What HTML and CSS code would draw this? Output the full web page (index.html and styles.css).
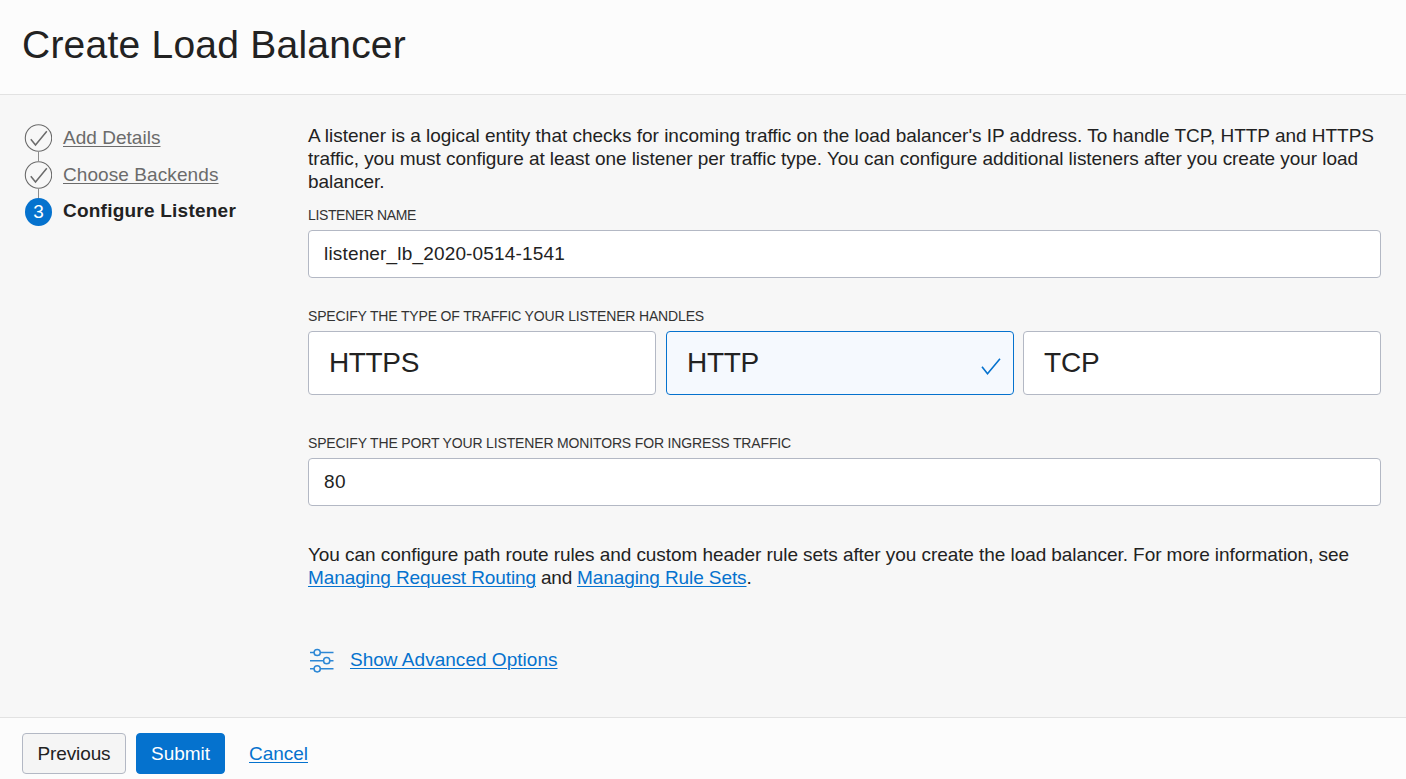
FILE: index.html
```html
<!DOCTYPE html>
<html lang="en">
<head>
<meta charset="utf-8">
<title>Create Load Balancer</title>
<link rel="stylesheet" href="styles.css">
</head>
<body>
<header class="header"><h1 class="title"><span class="fit" data-w="384">Create Load Balancer</span></h1></header>
<main class="main">
  <nav class="steps">
    <a class="step done"><svg class="mark" width="28" height="28" viewBox="0 0 28 28"><circle cx="14.5" cy="14" r="13.2"/><path d="M6.8 15.2 11.5 21 22.8 7.2"/></svg><span class="step-label fit" data-w="97.5">Add Details</span></a>
    <a class="step done"><svg class="mark" width="28" height="28" viewBox="0 0 28 28"><circle cx="14.5" cy="14" r="13.2"/><path d="M6.8 15.2 11.5 21 22.8 7.2"/></svg><span class="step-label fit" data-w="155.5">Choose Backends</span></a>
    <div class="step current"><span class="number">3</span><span class="step-label fit" data-w="173">Configure Listener</span></div>
  </nav>
  <section class="content">
    <p class="text"><span class="fit" data-w="1066">A listener is a logical entity that checks for incoming traffic on the load balancer's IP address. To handle TCP, HTTP and HTTPS</span><br><span class="fit" data-w="1050">traffic, you must configure at least one listener per traffic type. You can configure additional listeners after you create your load</span><br><span class="fit" data-w="76.5">balancer.</span></p>
    <label class="label name-label"><span class="fit" data-w="108">LISTENER NAME</span></label>
    <div class="input"><span class="fit" data-w="241">listener_lb_2020-0514-1541</span></div>
    <div class="label type-label"><span class="fit" data-w="396">SPECIFY THE TYPE OF TRAFFIC YOUR LISTENER HANDLES</span></div>
    <div class="cards">
      <div class="card"><span class="fit" data-w="90">HTTPS</span></div>
      <div class="card selected"><span class="fit" data-w="72">HTTP</span><svg class="check" width="20" height="18" viewBox="0 0 20 18"><path d="M1 8.7 6.5 15.8 19 .8"/></svg></div>
      <div class="card"><span class="fit" data-w="55.5">TCP</span></div>
    </div>
    <label class="label port-label"><span class="fit" data-w="483">SPECIFY THE PORT YOUR LISTENER MONITORS FOR INGRESS TRAFFIC</span></label>
    <div class="input"><span class="fit" data-w="22">80</span></div>
    <p class="text info"><span class="fit" data-w="1041">You can configure path route rules and custom header rule sets after you create the load balancer. For more information, see</span><br><a class="link fit" data-w="228">Managing Request Routing</a><span class="fit" data-w="41">&nbsp;and&nbsp;</span><a class="link fit" data-w="169.5">Managing Rule Sets</a>.</p>
    <div class="advanced">
      <svg class="sliders" width="26" height="26" viewBox="0 0 26 26"><path d="M2 4.5H6M12.4 4.5H25.5M2 12.7H15.4M21.8 12.7H25.5M2 20.8H6M12.4 20.8H25.5"/><circle cx="9.2" cy="4.5" r="3.1"/><circle cx="18.7" cy="12.7" r="3.1"/><circle cx="9.2" cy="20.8" r="3.1"/></svg>
      <a class="link fit" data-w="207.5">Show Advanced Options</a>
    </div>
  </section>
</main>
<footer class="footer">
  <button class="button"><span class="fit" data-w="73">Previous</span></button>
  <button class="button primary"><span class="fit" data-w="59">Submit</span></button>
  <a class="link fit" data-w="59">Cancel</a>
</footer>
<script src="fit.js"></script>
</body>
</html>
```
FILE: styles.css
```css
* { box-sizing: border-box; }
body {
  margin: 0;
  height: 779px;
  display: flex;
  flex-direction: column;
  overflow: hidden;
  background: #fcfcfc;
  color: #222;
  font: 19px/23px "Liberation Sans", Arial, sans-serif;
}
.fit { white-space: nowrap; }
.header { height: 95px; flex: none; padding: 22px 22px 0; border-bottom: 1px solid #e2e2e2; }
.title { margin: 0; font-size: 39px; font-weight: 400; line-height: 45px; }
.main { flex: 1; display: flex; background: #f7f7f7; min-height: 0; }
.steps { width: 308px; flex: none; padding: 29px 0 0 24px; }
.step { display: flex; align-items: flex-start; height: 37px; position: relative; color: #6b6b6b; }
.step-label { margin: 2px 0 0 11px; }
.done .step-label { text-decoration: underline; text-decoration-thickness: 1px; text-underline-offset: 2px; text-decoration-skip-ink: none; }
.done::after { content: ""; position: absolute; left: 14px; top: 28px; width: 1px; height: 9px; background: #8c8c8c; }
.mark { flex: none; fill: none; stroke: #6b6b6b; stroke-width: 1.1; }
.mark path { stroke-width: 1.5; }
.current { color: #222; font-weight: 700; }
.current .step-label { margin-top: 1px; }
.number { width: 27px; height: 28px; margin-left: 1px; flex: none; border-radius: 50%; background: #0572ce; color: #fff; font-weight: 400; line-height: 28px; text-align: center; }
.content { width: 1073px; padding-top: 29px; }
.text { margin: 0; white-space: nowrap; }
.label { display: block; font-size: 14px; line-height: 16px; color: #333; }
.name-label { margin: 14px 0 7px; }
.input { height: 48px; padding: 12px 15px; background: #fff; border: 1px solid #b3b8c4; border-radius: 4px; line-height: 22px; }
.type-label { margin: 30px 0 7px; }
.cards { display: flex; gap: 10px; }
.card { display: flex; flex: none; justify-content: space-between; width: 348px; height: 64px; padding: 14px 12px 0 20px; background: #fff; border: 1px solid #b3b8c4; border-radius: 4px; font-size: 28px; line-height: 33px; }
.card:last-child { width: 358px; margin-left: -1px; }
.selected { background: #f5f9fe; border-color: #0572ce; }
.check { margin-top: 12px; fill: none; stroke: #0572ce; stroke-width: 1.6; }
.port-label { margin: 40px 0 7px; }
.info { margin-top: 37px; }
.link { color: #0572ce; text-decoration: underline; text-decoration-thickness: 1px; text-underline-offset: 2px; }
.advanced { display: flex; gap: 16px; margin-top: 59px; }
.sliders { flex: none; fill: none; stroke: #2c87d5; stroke-width: 1.5; }
.footer { height: 62px; flex: none; display: flex; padding: 15px 22px 0; border-top: 1px solid #e2e2e2; }
.button { width: 104px; height: 41px; padding: 0; border: 1px solid #b3b8c4; border-radius: 4px; background: #f5f5f5; color: #222; font: inherit; margin-right: 10px; }
.primary { width: 89px; border-color: #0572ce; background: #0572ce; color: #fff; margin-right: 24px; }
.footer .link { margin-top: 9px; }
```
FILE: fit.js
```js
// Track each line of text to its design width.
document.querySelectorAll(".fit").forEach(function (el) {
  var width = el.getBoundingClientRect().width;
  var target = parseFloat(el.dataset.w);
  el.style.letterSpacing = (target - width) / el.textContent.length + "px";
});
```
